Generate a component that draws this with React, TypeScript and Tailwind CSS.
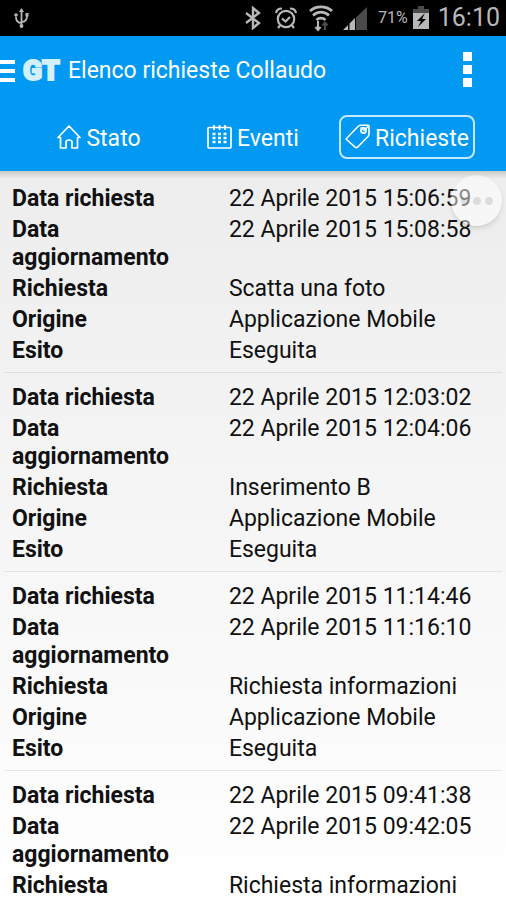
interface Request {
  requestedAt: string; updatedAt: string; kind: string;
  origin?: string; outcome?: string;
}

const requests: Request[] = [
  { requestedAt: '22 Aprile 2015 15:06:59', updatedAt: '22 Aprile 2015 15:08:58', kind: 'Scatta una foto', origin: 'Applicazione Mobile', outcome: 'Eseguita' },
  { requestedAt: '22 Aprile 2015 12:03:02', updatedAt: '22 Aprile 2015 12:04:06', kind: 'Inserimento B', origin: 'Applicazione Mobile', outcome: 'Eseguita' },
  { requestedAt: '22 Aprile 2015 11:14:46', updatedAt: '22 Aprile 2015 11:16:10', kind: 'Richiesta informazioni', origin: 'Applicazione Mobile', outcome: 'Eseguita' },
  { requestedAt: '22 Aprile 2015 09:41:38', updatedAt: '22 Aprile 2015 09:42:05', kind: 'Richiesta informazioni' },
];

function StatusBar() {
  return (
    <div className="flex h-9 shrink-0 items-center bg-black pl-3 pr-1.5 text-[#b8b8b8]">
      <svg width="18" height="22" viewBox="0 0 18 22" fill="none" stroke="currentColor" strokeWidth="1.8">
        <path d="M9.5 3v15M9.5 16c-3.500 0-5.500-1.500-5.500-6M9.500 15c3.500 0 5.500-1.500 5.500-6" />
        <path d="M9.500 1 7 5h5z" fill="currentColor" stroke="none" />
        <circle cx="9.500" cy="19" r="1.900" fill="currentColor" stroke="none" />
        <circle cx="4" cy="8" r="1.800" fill="currentColor" stroke="none" />
        <rect x="13.500" y="6" width="3" height="3.500" fill="currentColor" stroke="none" />
      </svg>
      <div className="ml-auto flex items-center">
        <svg className="mr-3" width="18" height="24" viewBox="0 0 18 24" fill="none" stroke="currentColor" strokeWidth="2.400">
          <path d="m2 7 13 10-6 5V2l6 5L2 17" />
        </svg>
        <svg className="mr-2.5" width="24" height="24" viewBox="0 0 24 24" fill="none" stroke="currentColor" strokeWidth="2.200">
          <circle cx="12" cy="13" r="8.200" />
          <path d="m8 12.500 3.500 3L16 11M2 7c.5-3 3-4.500 6-4.500M22 7c-.5-3-3-4.500-6-4.500M6 19.500l-2 2.500M18 19.500l2 2.500" />
        </svg>
        <svg className="mr-2" width="26" height="28" viewBox="0 0 26 28" fill="none" stroke="currentColor" strokeWidth="2.600">
          <path d="M2 7C8 1.500 18 1.500 24 7M5 11.500c4.500-4.500 11.500-4.500 16 0M8.500 16c2.500-2.500 6.500-2.500 9 0" />
          <path d="M10 17v9M7.500 23l2.500 3 2.500-3" strokeWidth="2" />
          <path d="M17 26v-7M14.500 21.500l2.500-3 2.500 3" stroke="#4a4a4a" strokeWidth="2" />
        </svg>
        <svg className="mr-2.5" width="26" height="24" viewBox="0 0 26 24">
          <path d="M14 11.500 25 1v23H14z" fill="#4a4a4a" />
          <path d="M1 24l5-5v5zM7.500 17.500 13 12v12H7.500z" fill="currentColor" />
        </svg>
        <span className="mr-1 text-base">71%</span>
        <svg className="mr-2" width="18" height="24" viewBox="0 0 18 24">
          <path d="M6 0h6v3h5v5H1V3h5z" fill="#4a4a4a" />
          <path d="M1 7h16v16H1z" fill="currentColor" />
          <path d="m13 7-8 8h4l-3 6 8-8h-4z" fill="#000" />
        </svg>
        <span className="text-[25px] leading-9">16:10</span>
      </div>
    </div>
  );
}

function HomeIcon() {
  return (
    <svg width="24" height="24" viewBox="0 0 24 24" fill="none" stroke="currentColor" strokeWidth="1.700" strokeLinejoin="round" strokeLinecap="round">
      <path d="M1 12.500 12 1l11 11.500h-2.500V23H15v-6q0-2-3-2t-3 2v6H3.500V12.500z" />
    </svg>
  );
}

function CalendarIcon() {
  return (
    <svg width="25" height="24" viewBox="0 0 25 24" fill="none" stroke="currentColor" strokeWidth="1.700">
      <rect x="1" y="2.500" width="23" height="20.500" rx="1" />
      <path d="M7 0v5M12.500 0v5M18 0v5" />
      <path d="M5.500 9h3M11 9h3M16.500 9h3M5.500 13h3M11 13h3M16.500 13h3M5.500 17h3M11 17h3M16.500 17h3" strokeWidth="2.500" />
    </svg>
  );
}

function TagIcon() {
  return (
    <svg width="25" height="25" viewBox="0 0 25 25" fill="none" stroke="currentColor" strokeWidth="1.600" strokeLinejoin="round">
      <path d="M1.500 14.500 13 2.500Q14 1.200 15.500 1.200H23q1 0 1 1V10q0 1.500-1.200 2.800L12.500 23.200q-1.200 1-2.400 0L1.500 15.500q-.5-.5 0-1z" />
      <circle cx="18.500" cy="6.500" r="2.600" />
      <path d="M15.500 3.500 19 6.500l5-5" strokeWidth="1.200" />
    </svg>
  );
}

const tabs = [
  { label: 'Stato', icon: HomeIcon },
  { label: 'Eventi', icon: CalendarIcon },
  { label: 'Richieste', icon: TagIcon, active: true },
];

function Row({ label, value }: { label: string; value: string }) {
  return (
    <div className="grid grid-cols-[9fr_11fr]">
      <dt className="pr-10 font-bold">{label}</dt>
      <dd>{value}</dd>
    </div>
  );
}

export default function App() {
  return (
    <div className="flex h-screen flex-col overflow-hidden font-['Roboto',sans-serif] text-[23px] leading-7 text-[#111]">
      <StatusBar />
      <header className="shrink-0 bg-[#0299f3] text-white">
        <div className="flex h-[68px] items-center pt-0.5">
          <button aria-label="Menu" className="mr-2 flex w-[15px] flex-col gap-[5px]">
            <span className="h-1 bg-white" />
            <span className="h-1 bg-white" />
            <span className="h-1 bg-white" />
          </button>
          <span className="mr-2 w-[37px] text-[28px] font-black text-[#d3f0ff] [-webkit-text-stroke:2px_#d3f0ff]">GT</span>
          <h1>Elenco richieste Collaudo</h1>
          <button aria-label="Altre opzioni" className="ml-auto mr-7 flex flex-col gap-1 px-1.5 pb-1">
            <span className="size-[9px] bg-white" />
            <span className="size-[9px] bg-white" />
            <span className="size-[9px] bg-white" />
          </button>
        </div>
        <nav className="grid h-[67px] grid-cols-3 items-center justify-items-center px-[22px] pb-0.5">
          {tabs.map(({ label, icon: Icon, active }) => (
            <button
              key={label}
              className={`flex h-11 items-center gap-[5px] rounded-lg border-2 px-1 ${active ? 'border-[#c5e8fd]' : 'border-transparent'}`}
            >
              <Icon />
              <span className="pt-1">{label}</span>
            </button>
          ))}
        </nav>
      </header>
      <main className="relative grow overflow-y-auto bg-linear-to-b from-[#ededed] to-white [scrollbar-width:none]">
        <div className="absolute inset-x-0 top-0 h-2 bg-linear-to-b from-black/15 to-transparent" />
        <ul className="px-1 pt-[3px]">
          {requests.map((r) => (
            <li key={r.requestedAt} className="border-b border-black/8 px-2 pb-[7px] pt-[11px] last:border-b-0">
              <dl className="flex flex-col gap-[3px]">
                <Row label="Data richiesta" value={r.requestedAt} />
                <Row label="Data aggiornamento" value={r.updatedAt} />
                <Row label="Richiesta" value={r.kind} />
                {r.origin && <Row label="Origine" value={r.origin} />}
                {r.outcome && <Row label="Esito" value={r.outcome} />}
              </dl>
            </li>
          ))}
        </ul>
        <button
          aria-label="Altro"
          className="absolute right-1 top-1 flex size-[51px] items-center justify-center gap-1 rounded-full bg-white/50 shadow-md"
        >
          <span className="size-2 rounded-full bg-black/10" />
          <span className="size-2 rounded-full bg-black/10" />
          <span className="size-2 rounded-full bg-black/10" />
        </button>
      </main>
    </div>
  );
}
